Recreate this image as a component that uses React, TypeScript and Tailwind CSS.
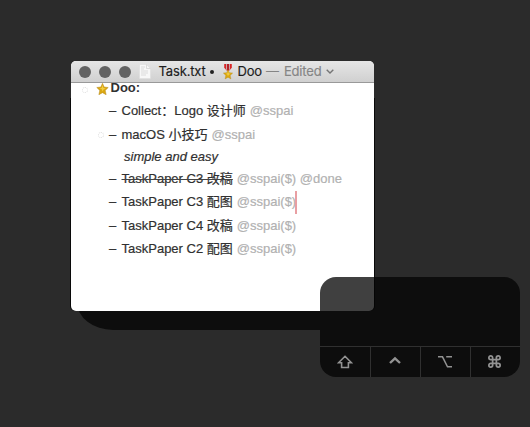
import React from "react";

const items = [
  { name: "TaskPaper C3 改稿", tags: "@sspai($) @done", done: true, height: "h-[22px]" },
  { name: "TaskPaper C3 配图", tags: "@sspai($)", caret: true, height: "h-6" },
  { name: "TaskPaper C4 改稿", tags: "@sspai($)", height: "h-[23px]" },
  { name: "TaskPaper C2 配图", tags: "@sspai($)", height: "h-6" },
];

function Medal({ className }: { className: string }) {
  return (
    <svg viewBox="0 0 10 18" className={className}>
      <path d="M1 0h8v4L6.5 7h-3L1 4z" fill="#d82425" />
      <path d="M3 0h1v6H3zM6 0h1v6H6z" fill="#c9b4b4" />
      <path d="M4 0h2v7H4z" fill="#b3202a" />
      <Star />
    </svg>
  );
}

function Star() {
  return (
    <>
      <path d="M5 6l1.4 3.2 3.5.4-2.6 2.5.8 3.7L5 14l-3.1 1.8.8-3.7L.1 9.6l3.5-.4z" fill="#dba812" stroke="#b3861a" strokeWidth=".4" />
      <path d="M5 7.5l.8 2.5 2 .4-2 1L5 13l-.7-2-2-.7 2-.3z" fill="#f3cf45" />
    </>
  );
}

function Row({ name, tags, done, caret, height }: { name: string; tags: string; done?: boolean; caret?: boolean; height: string }) {
  return (
    <div className={`flex items-center whitespace-pre pl-[38px] ${height}`}>
      <span className="w-[12.5px]">–</span>
      <span className={done ? "line-through decoration-[#444] decoration-1" : ""}>{name}</span>
      <span className="ml-[4px] text-[#b1b1b1]">{tags}</span>
      {caret && <span className="-ml-px mt-px h-[23px] w-0.5 bg-[#e99fa3]" />}
    </div>
  );
}

export default function App() {
  return (
    <div className="relative h-[427px] w-[530px] overflow-hidden bg-[#2b2b2b] font-['Liberation_Sans','Noto_Sans_CJK_SC',sans-serif]">
      <div className="absolute left-[77px] top-[290px] h-10 w-[243px] rounded-bl-[36px_28px] bg-[#0d0d0d]" />
      <div className="absolute left-[70px] top-[98px] h-[213px] w-[305px] rounded-b-[5px] bg-[#090909]" />
      <main className="absolute left-[71px] top-[61px] flex h-[250px] w-[303px] flex-col overflow-hidden rounded-[5px] bg-white">
        <header className="flex h-[22px] shrink-0 items-center whitespace-pre border-b border-[#999] bg-linear-to-b from-[#e6e6e6] to-[#d0d0d0] pl-2 font-['Inter',sans-serif] text-[13px] text-[#1c1c1c]">
          <div className="flex gap-2">
            <i className="size-3 rounded-full bg-[#636363]" />
            <i className="size-3 rounded-full bg-[#636363]" />
            <i className="size-3 rounded-full bg-[#636363]" />
          </div>
          <svg viewBox="0 0 12 15" className="ml-2 h-[15px] w-3">
            <path d="M.5.5h7l4 4v10H.5z" fill="#f7f7f7" stroke="#dedede" strokeWidth=".6" />
            <path d="M7.5.5v4h4M2 3h4M2 5h3M2 7h7M2 9h7M2 11h5" fill="none" stroke="#cfcfcf" strokeWidth=".7" />
          </svg>
          <span className="mt-px ml-[7.5px] w-[47px] tracking-[-0.15px] [-webkit-text-stroke:0.15px]">Task.txt</span>
          <span className="ml-[4px] mr-[9.5px] mt-px size-1 rounded-full bg-[#222]" />
          <Medal className="mt-px h-[17px] w-[10px]" />
          <span className="mt-px ml-[4.5px] w-[28.5px] tracking-[-0.2px] [-webkit-text-stroke:0.15px]">Doo</span>
          <span className="mt-px w-[18px] text-[#858585]">—</span>
          <span className="mt-px w-[41px] text-[#858585] tracking-[-0.2px] [-webkit-text-stroke:0.15px]">Edited</span>
          <svg viewBox="0 0 8 5" className="ml-[1px] h-[5px] w-2">
            <path d="M.7.7L4 4 7.3.7" fill="none" stroke="#757575" strokeWidth="1.4" />
          </svg>
        </header>
        <section className="text-[13px] leading-5 text-[#303030] [-webkit-text-stroke:0.2px]">
          <div className="flex h-4 items-center pl-[11px]">
            <i className="mb-[3px] size-1.5 rounded-full border border-dotted border-[#ddd]" />
            <svg viewBox="0 5.8 10 10.2" className="mb-[5px] ml-2 h-3 w-[13px]">
              <Star />
            </svg>
            <strong className="mb-[7px] ml-[1.5px] [-webkit-text-stroke:0px]">Doo:</strong>
          </div>
          <Row name="Collect：Logo 设计师" tags="@sspai" height="h-6" />
          <div className="relative">
            <i className="absolute left-[27px] top-[9px] size-1.5 rounded-full border border-dotted border-[#ddd]" />
            <Row name="macOS 小技巧" tags="@sspai" height="h-[23px]" />
          </div>
          <div className="flex h-[22px] items-center pl-[53px] italic">simple and easy</div>
          {items.map((item) => <Row key={item.name} {...item} />)}
        </section>
      </main>
      <aside className="absolute left-[320px] top-[277px] flex h-[100px] w-[200px] flex-col overflow-hidden rounded-2xl">
        <div className="h-full w-full bg-[#040404]/76" />
        <div className="grid h-[31px] shrink-0 grid-cols-[50px_50px_50px_50px] border-t border-[#303030] bg-[#0d0d0d] text-[#929292]">
          <div className="flex items-center justify-center pb-px">
            <svg viewBox="0 0 16 14" className="h-[14px] w-4"><path d="M8 1.3L14.4 7.7H11.4v4.8H4.6V7.7H1.6z" fill="none" stroke="currentColor" strokeWidth="1.6" /></svg>
          </div>
          <div className="flex items-center justify-center border-l border-[#303030] pr-0.5 pb-px">
            <svg viewBox="0 0 12 14" className="h-[14px] w-3"><path d="M1 8L6 3.3 11 8" fill="none" stroke="currentColor" strokeWidth="2.4" /></svg>
          </div>
          <div className="flex items-center justify-center border-l border-[#303030] pr-px pb-px">
            <svg viewBox="0 0 14 14" className="h-[14px] w-[14px]"><path d="M0 1.8h4.5l5 10H14M8.2 1.8H14" fill="none" stroke="currentColor" strokeWidth="1.5" /></svg>
          </div>
          <div className="flex items-center justify-center border-l border-[#303030] pr-[3px] pb-px">
            <svg viewBox="0 0 24 24" className="h-[15px] w-[15px]" fill="none" stroke="currentColor" strokeWidth="2.8"><path d="M15 6v12a3 3 0 1 0 3-3H6a3 3 0 1 0 3 3V6a3 3 0 1 0-3 3h12a3 3 0 1 0-3-3" /></svg>
          </div>
        </div>
      </aside>
    </div>
  );
}
